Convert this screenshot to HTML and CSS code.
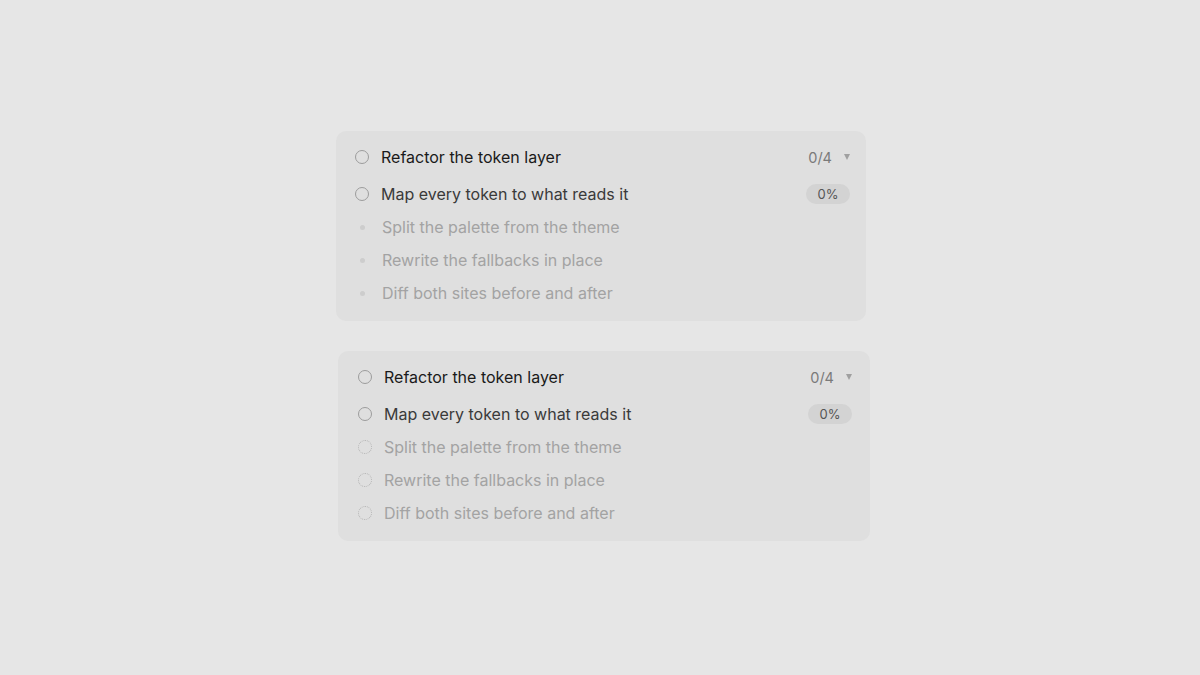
FILE: index.html
```html
<!DOCTYPE html>
<html>
<head>
  <title>Task list</title>
  <link rel="stylesheet" href="styles.css">
</head>
<body>
  <div class="stack">
    <div class="card">
      <div class="row title-row">
        <span class="check"></span>
        <span class="title">Refactor the token layer</span>
        <span class="count">0/4</span>
        <span class="caret"></span>
      </div>
      <div class="row">
        <span class="check"></span>
        <span class="task">Map every token to what reads it</span>
        <span class="pill">0%</span>
      </div>
      <div class="row muted">
        <span class="dot"></span>
        <span class="task">Split the palette from the theme</span>
      </div>
      <div class="row muted">
        <span class="dot"></span>
        <span class="task">Rewrite the fallbacks in place</span>
      </div>
      <div class="row muted">
        <span class="dot"></span>
        <span class="task">Diff both sites before and after</span>
      </div>
    </div>

    <div class="card wide">
      <div class="row title-row">
        <span class="check"></span>
        <span class="title">Refactor the token layer</span>
        <span class="count">0/4</span>
        <span class="caret"></span>
      </div>
      <div class="row">
        <span class="check"></span>
        <span class="task">Map every token to what reads it</span>
        <span class="pill">0%</span>
      </div>
      <div class="row muted">
        <span class="ring"></span>
        <span class="task">Split the palette from the theme</span>
      </div>
      <div class="row muted">
        <span class="ring"></span>
        <span class="task">Rewrite the fallbacks in place</span>
      </div>
      <div class="row muted">
        <span class="ring"></span>
        <span class="task">Diff both sites before and after</span>
      </div>
    </div>
  </div>
</body>
</html>
```

FILE: styles.css
```css
html,
body {
  margin: 0;
  height: 100%;
}

body {
  background: #e6e6e6;
  font-family: Inter, "Noto Sans", sans-serif;
  display: flex;
  align-items: center;
  justify-content: center;
}

.stack {
  display: flex;
  flex-direction: column;
  gap: 30px;
  padding-left: 6px;
  margin-bottom: 3px;
}

.card {
  width: 530px;
  box-sizing: border-box;
  background: #dfdfdf;
  border-radius: 10px;
  padding: 14px 15px 16px 19px;
  display: flex;
  flex-direction: column;
  gap: 9px;
}

.card.wide {
  width: 532px;
  margin-left: 2px;
  padding-left: 20px;
  padding-right: 17px;
}

.row {
  display: flex;
  align-items: center;
  height: 24px;
}

.title-row {
  margin-bottom: 4px;
}

.check {
  width: 12px;
  height: 12px;
  border: 1.5px solid #9c9c9c;
  border-radius: 50%;
  flex: none;
  margin-right: 12px;
}

.dot {
  width: 5px;
  height: 5px;
  border-radius: 50%;
  background: #cdcdcd;
  margin: 0 17px 0 5px;
  flex: none;
}

.ring {
  width: 12px;
  height: 12px;
  border: 1.5px dotted #b3b3b3;
  border-radius: 50%;
  flex: none;
  margin-right: 12px;
}

.title {
  font-size: 16px;
  color: #1a1a1a;
  flex: 1;
}

.task {
  font-size: 16px;
  color: #3a3a3a;
  flex: 1;
}

.muted .task {
  color: #a3a3a3;
}

.count {
  font-size: 14.5px;
  color: #7a7a7a;
  margin-right: 12px;
}

.caret {
  width: 0;
  height: 0;
  border-left: 3.5px solid transparent;
  border-right: 3.5px solid transparent;
  border-top: 6px solid #a0a0a0;
  margin-right: 1px;
}

.pill {
  background: #d3d3d3;
  color: #555555;
  font-size: 13px;
  width: 44px;
  height: 20px;
  line-height: 20px;
  text-align: center;
  border-radius: 10px;
  margin-right: 1px;
}
```
